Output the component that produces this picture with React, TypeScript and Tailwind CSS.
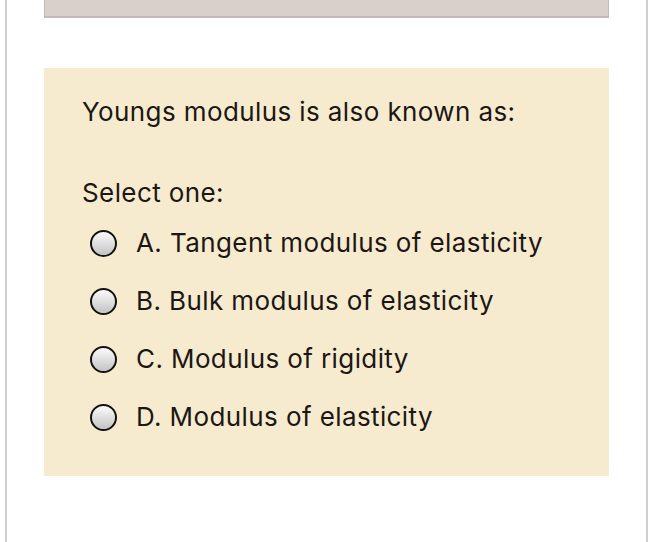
export default function App() {
  const options = [
    "A. Tangent modulus of elasticity",
    "B. Bulk modulus of elasticity",
    "C. Modulus of rigidity",
    "D. Modulus of elasticity",
  ];
  return (
    <div className="h-[542px] w-[653px] overflow-hidden bg-white" style={{ fontFamily: "Inter, 'Liberation Sans', sans-serif" }}>
      <div className="mx-[5px] h-full border-x-2 border-[#cfcfcf] px-[37px]">
        <div className="h-[18px] border-x border-b-2 border-[#c6b8b8] bg-[#d9d0cb]" />
        <div className="mt-[50px] bg-[#f7ebcf] pl-[38px] pt-[26px] pb-[41px] text-[#1c1714]">
          <p className="text-[26px] leading-[36px] tracking-[0.4px]">Youngs modulus is also known as:</p>
          <p className="mt-[45px] text-[26px] leading-[36px] tracking-[0.4px]">Select one:</p>
          <div className="mt-[14px] flex flex-col gap-[22px] pl-[8px]">
            {options.map((o) => (
              <label key={o} className="flex items-center gap-[19px] text-[26px] leading-[36px] tracking-[0.4px]">
                <span className="h-[27px] w-[27px] shrink-0 rounded-full border-2 border-[#111] bg-gradient-to-b from-[#fbfbfb] to-[#c4c4c4]" />
                <span>{o}</span>
              </label>
            ))}
          </div>
        </div>
      </div>
    </div>
  );
}
